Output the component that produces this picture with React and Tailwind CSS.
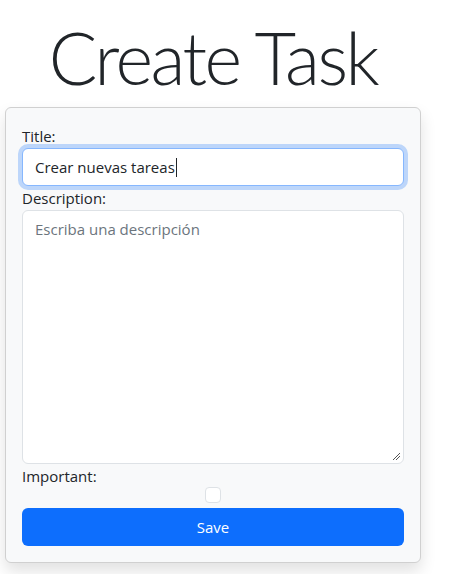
export default function App() {
  return (
    <div className="min-h-screen bg-white font-['Open_Sans',sans-serif] text-[#212529]">
      <div className="ml-[5px] w-[416px]">
        <h1 className="pt-[15px] pb-[8px] text-center font-['Lato',sans-serif] text-[72px] font-light leading-[84px] tracking-[-2.5px]">
          Create Task
        </h1>
        <div className="rounded-md border border-[#d0d0d0] bg-[#f8f9fa] p-4 shadow-[0_8px_16px_rgba(0,0,0,0.12)]">
          <form className="flex flex-col">
            <label className="text-[15px] leading-6">Title:</label>
            <div className="h-[38px] rounded-md border border-[#86b7fe] bg-white px-3 text-[15px] leading-[36px] shadow-[0_0_0_4px_rgba(13,110,253,0.25)]">
              Crear nuevas tareas<span className="ml-px inline-block h-[19px] w-px translate-y-[4px] bg-[#212529]" />
            </div>
            <label className="text-[15px] leading-6">Description:</label>
            <div className="relative h-[254px] rounded-md border border-[#dee2e6] bg-white px-3 py-[6px] text-[15px] leading-6 text-[#6c757d]">
              Escriba una descripción
              <svg className="absolute bottom-[2px] right-[2px]" width="9" height="9" viewBox="0 0 9 9">
                <path d="M1 8 L8 1 M4 8 L8 4" stroke="#555" strokeWidth="1" />
              </svg>
            </div>
            <label className="text-[15px] leading-6">Important:</label>
            <div className="flex justify-center">
              <span className="mt-[-1px] h-4 w-4 rounded-[4px] border border-[#dee2e6] bg-white" />
            </div>
            <button
              type="button"
              className="mt-[5px] h-[38px] rounded-md bg-[#0d6efd] text-[15px] text-white"
            >
              Save
            </button>
          </form>
        </div>
      </div>
    </div>
  );
}
